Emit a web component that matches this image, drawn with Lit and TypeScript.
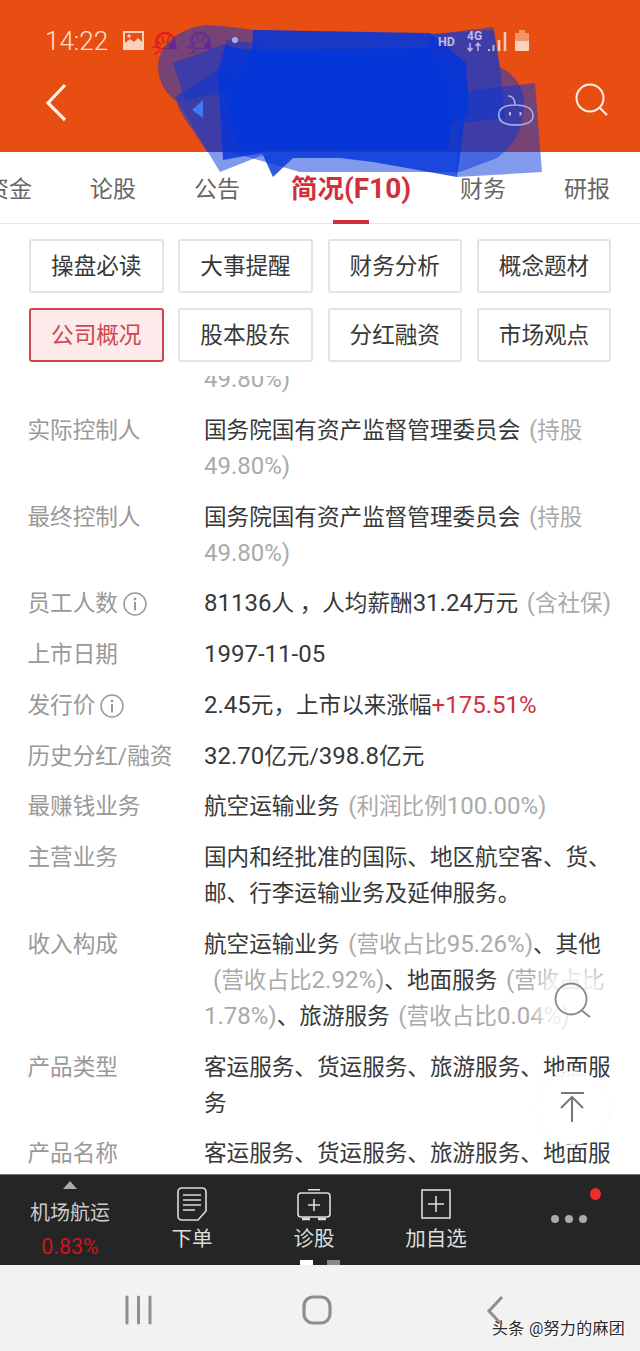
import { LitElement, html, css, svg } from "lit";
import { customElement } from "lit/decorators.js";

const split = (s: string) =>
  s.split(/([0-9A-Za-z.%\-\/()+]+)/).map((p, i) => (i % 2 ? html`<span class="n">${p}</span>` : p));

const info = html`<svg class="info" viewBox="0 0 24 24" width="24" height="24"><circle cx="12" cy="12" r="11" fill="none" stroke="#999" stroke-width="1.5"/><circle cx="12" cy="7" r="1.4" fill="#999"/><rect x="11" y="10" width="2" height="8.5" fill="#999"/></svg>`;

const rib = (a: number, c: string) => {
  const r = (a * Math.PI) / 180;
  const x1 = 10 + Math.cos(r) * 5, y1 = 16 + Math.sin(r) * 5;
  const x2 = 10 + Math.cos(r) * 12.5, y2 = 16 + Math.sin(r) * 12.5;
  return svg`<path d="M${x1} ${y1} L${x2} ${y2}" stroke="${c}" stroke-width="1.8"/>`;
};
const shell = (x: number, y: number, c: string, d: string) => svg`<g transform="translate(${x} ${y})">
  <path d="M3 16 C-1 7 4 1 10 1 C16 1 21 6 19 12" fill="none" stroke="${c}" stroke-width="2.4"/>
  ${[150, 185, 220, 255, 290, 325].map((a) => rib(a, c))}
  <path d="M4 16.500 H15" stroke="${c}" stroke-width="1.8"/>
  <path d="M18 8 L23 17 H13 Z" fill="${d}"/></g>`;

const BLUE = "#0536d8";
const scribble = [
  "M158 65 C160 40 185 27 207 25 C225 26 240 28 253 30 L430 34 L494 30 L500 67 C515 75 525 88 524 105 C522 130 518 140 497 158 L460 172 L300 172 L230 152 L207 152 C190 125 178 112 177 102 C168 95 158 85 158 65 Z",
  "M428 35 L493 27 L501 75 L505 118 L440 125 Z",
  "M430 58 L466 62 L470 115 L430 120 Z",
  "M460 92 L535 83 L542 172 L457 177 Z",
  "M175 97 L220 172 L263 155 L262 80 L217 70 Z",
  "M173 63 L228 43 L240 90 L185 100 Z",
  "M227 40 L260 44 L260 100 L218 90 Z",
];

@customElement("app-root")
export class AppRoot extends LitElement {
  static styles = css`
    :host { display: block; width: 640px; height: 1351px; position: relative; overflow: hidden; background: #fff;
      font-family: Roboto, "Noto Sans CJK SC", sans-serif; font-size: 22.6px; color: #383838; }
    .n { font-size: 24px; line-height: 0; }
    .page { display: flex; flex-direction: column; height: 1351px; }
    .header { height: 152px; background: #e84e12; flex: none; display: flex; flex-direction: column; }
    .status { height: 82px; padding-left: 45px; display: flex; align-items: center; color: #fde0d0; font-size: 26px; font-weight: 300; }
    .nav { flex: 1; display: flex; justify-content: space-between; padding: 0 30px 0 44px; align-items: flex-start; }
    .tabs { height: 72px; flex: none; display: flex; margin-left: -43px; border-bottom: 1px solid #e6e6e6; width: 700px; color: #666; box-sizing: border-box; font-size: 23px; }
    .tab { width: 104px; flex: none; display: flex; justify-content: center; padding-top: 20px; box-sizing: border-box; white-space: nowrap; line-height: 36px; }
    .tab.on { width: 164px; margin-right: -2px; padding-top: 19px; color: #d22f3c; font-weight: 700; font-size: 26.5px; position: relative; }
    .tab.on .n { font-size: 28px; line-height: 36px; }
    .tab.on::after { content: ""; position: absolute; left: 64px; bottom: -1px; width: 36px; height: 4px; background: #d22f3c; }
    .grid { flex: none; display: grid; grid-template-columns: repeat(4, 134.5px); gap: 15px 14.75px; padding: 15px 28px 14px 29px; }
    .btn { height: 54px; box-sizing: border-box; border: 2px solid #e3e3e3; border-radius: 3px; display: flex; align-items: center; justify-content: center; padding-bottom: 4px; }
    .btn.on { border-color: #cf4650; background: #fdeaea; color: #cf4650; }
    .scroll { flex: 1; overflow: hidden; min-height: 0; padding: 0 28px 0 27.5px; }
    .list { margin-top: -14px; display: flex; flex-direction: column; gap: 14.75px; }
    .row { display: grid; grid-template-columns: 176.5px 1fr; line-height: 36px; }
    .k { color: #999; display: flex; align-items: center; gap: 5px; height: 36px; white-space: nowrap; }
    .g { color: #aaa; margin-left: 3px; }
    .g.lead { margin-left: 9px; }
    .g.none { margin-left: 0; }
    .r { color: #d22f3c; }
    .bar { height: 91px; flex: none; background: #252525; border-top: 1px solid #777; box-sizing: border-box; display: flex; color: #ddd; position: relative; }
    .stock { width: 140px; display: flex; flex-direction: column; align-items: center; color: #ccc; font-size: 20px; padding-top: 6px; box-sizing: border-box; }
    .tri { width: 0; height: 0; border: 7.5px solid transparent; border-top: 0; border-bottom: 8px solid #aaa; }
    .name { line-height: 30px; margin-top: 9px; }
    .pct { color: #c9171e; line-height: 28px; font-size: 21.5px; margin-top: 5px; }
    .item { display: flex; flex-direction: column; align-items: center; width: 122px; padding-top: 12px; box-sizing: border-box; font-size: 20.5px; line-height: 30px; gap: 3px; }
    .item.a { margin-left: -9px; }
    .item svg { display: block; }
    .dot { position: absolute; left: 590px; top: 13px; width: 11px; height: 12px; border-radius: 50%; background: #ee2b2f; }
    .dots { position: absolute; left: 551px; top: 40px; display: flex; gap: 6px; }
    .dots i { width: 8px; height: 8px; border-radius: 50%; background: #aaa; }
    .pager { position: absolute; left: 300px; bottom: 0; display: flex; gap: 14px; }
    .pager i { width: 13px; height: 5px; background: #888; }
    .pager i:first-child { background: #fff; }
    .sys { height: 86px; flex: none; background: #f2f2f2; position: relative; }
    .mark { position: absolute; left: 492px; top: 53px; font-size: 16px; line-height: 22px; color: #2a2a2a; white-space: nowrap; letter-spacing: .3px; text-shadow: 0 0 2px #fff, 1px 1px 0 #fff; }
    .mark .n { font-size: 16px; }
    .over { position: absolute; left: 0; top: 0; pointer-events: none; }
    .glass { position: absolute; left: 526px; top: 956px; width: 92px; height: 92px; border-radius: 50%; background: radial-gradient(circle, rgba(255,255,255,.78) 40%, rgba(255,255,255,0) 72%); }
    .up { position: absolute; left: 536px; top: 1071px; width: 74px; height: 74px; border-radius: 50%; background: rgba(255,255,255,.95); box-shadow: 0 0 2px rgba(0,0,0,.08); }
  `;

  render() {
    const btns = ["操盘必读", "大事提醒", "财务分析", "概念题材", "公司概况", "股本股东", "分红融资", "市场观点"];
    return html`
      <div class="page">
        <div class="header">
          <div class="status"><span>14:22</span></div>
          <div class="nav">
            <svg width="24" height="40" viewBox="0 0 24 40"><path d="M21 3 L4 21 L21 38" fill="none" stroke="#fdf0e8" stroke-width="3.2"/></svg>
            <svg width="36" height="36" viewBox="0 0 36 36"><circle cx="16" cy="16" r="13.5" fill="none" stroke="#fdf0e8" stroke-width="2"/><path d="M26 26 L33 33" stroke="#fdf0e8" stroke-width="2.2"/></svg>
          </div>
        </div>
        <div class="tabs">
          ${["资金", "论股", "公告"].map((t) => html`<div class="tab">${t}</div>`)}
          <div class="tab on">${split("简况(F10)")}</div>
          ${["财务", "研报"].map((t) => html`<div class="tab">${t}</div>`)}
        </div>
        <div class="grid">${btns.map((b, i) => html`<div class="btn ${i === 4 ? "on" : ""}">${b}</div>`)}</div>
        <div class="scroll"><div class="list">
          <div class="row"><div class="k"></div><div class="g none">${split("49.80%)")}</div></div>
          <div class="row"><div class="k">实际控制人</div><div>国务院国有资产监督管理委员会 <span class="g">${split("(持股 49.80%)")}</span></div></div>
          <div class="row"><div class="k">最终控制人</div><div>国务院国有资产监督管理委员会 <span class="g">${split("(持股 49.80%)")}</span></div></div>
          <div class="row"><div class="k">员工人数${info}</div><div>${split("81136")}人 ，人均薪酬${split("31.24")}万元 <span class="g">${split("(含社保)")}</span></div></div>
          <div class="row"><div class="k">上市日期</div><div>${split("1997-11-05")}</div></div>
          <div class="row"><div class="k">发行价${info}</div><div>${split("2.45")}元，上市以来涨幅<span class="r">${split("+175.51%")}</span></div></div>
          <div class="row"><div class="k">历史分红/融资</div><div>${split("32.70")}亿元/${split("398.8")}亿元</div></div>
          <div class="row"><div class="k">最赚钱业务</div><div>航空运输业务 <span class="g">${split("(利润比例100.00%)")}</span></div></div>
          <div class="row"><div class="k">主营业务</div><div>国内和经批准的国际、地区航空客、货、邮、行李运输业务及延伸服务。</div></div>
          <div class="row"><div class="k">收入构成</div><div>航空运输业务 <span class="g">${split("(营收占比95.26%)")}</span>、其他 <span class="g lead">${split("(营收占比2.92%)")}</span>、地面服务 <span class="g">${split("(营收占比1.78%)")}</span>、旅游服务 <span class="g">${split("(营收占比0.04%)")}</span></div></div>
          <div class="row"><div class="k">产品类型</div><div>客运服务、货运服务、旅游服务、地面服务</div></div>
          <div class="row"><div class="k">产品名称</div><div>客运服务、货运服务、旅游服务、地面服务</div></div>
        </div></div>
        <div class="bar">
          <div class="stock"><div class="tri"></div><div class="name">机场航运</div><div class="pct">0.83%</div></div>
          <div class="item a">
            <svg width="30" height="34" viewBox="0 0 30 34"><path d="M5 1 H25 Q29 1 29 5 V24 L21 33 H5 Q1 33 1 29 V5 Q1 1 5 1 Z" fill="none" stroke="#ddd" stroke-width="1.6"/><path d="M6 8 H24 M6 13 H24 M6 18 H24 M6 23 H18" stroke="#ddd" stroke-width="1.6"/></svg>
            <span>下单</span>
          </div>
          <div class="item">
            <svg width="34" height="34" viewBox="0 0 34 34"><path d="M11 2.800 H23 M4 6 H30 Q33 6 33 9 V27 Q33 30 30 30 H4 Q1 30 1 27 V9 Q1 6 4 6 Z M17 12 V24 M11 18 H23" fill="none" stroke="#ddd" stroke-width="1.6"/><path d="M5 32 H13 M21 32 H29" stroke="#ddd" stroke-width="2.4"/></svg>
            <span>诊股</span>
          </div>
          <div class="item">
            <svg width="30" height="34" viewBox="0 0 30 34"><rect x="1" y="3" width="28" height="28" fill="none" stroke="#ddd" stroke-width="1.6"/><path d="M15 9 V25 M7 17 H23" stroke="#ddd" stroke-width="1.6"/></svg>
            <span>加自选</span>
          </div>
          <div class="dot"></div>
          <div class="dots"><i></i><i></i><i></i></div>
          <div class="pager"><i></i><i></i></div>
        </div>
        <div class="sys">
          <svg width="640" height="86" viewBox="0 0 640 86">
            <path d="M127 32 V58 M138.500 32 V58 M150 32 V58" stroke="#8e8e8e" stroke-width="3" stroke-linecap="round"/>
            <rect x="304" y="32" width="26" height="26" rx="9" fill="none" stroke="#8e8e8e" stroke-width="3.2"/>
            <path d="M502 32 L489 46 L502 60" fill="none" stroke="#8e8e8e" stroke-width="3"/>
          </svg>
          <div class="mark">头条 ${split("@")}努力的麻团</div>
        </div>
      </div>
      <div class="glass"></div>
      <div class="up"></div>
      <svg class="over" width="640" height="1351" viewBox="0 0 640 1351">
        <rect x="124" y="32" width="19" height="17" fill="none" stroke="#fbd3bd" stroke-width="2"/>
        <path d="M125 48 V43 L130 39 L134 42 L138 38 L142 42 V48 Z" fill="#fbd3bd"/>
        <circle cx="129" cy="36" r="1.800" fill="#fbd3bd"/>
        ${shell(155, 32, "#e0201c", "#c0145a")}
        ${shell(190, 32, "#b83048", "#c0145a")}
        ${scribble.map((d) => svg`<path d="${d}" fill="${BLUE}" opacity=".5"/>`)}
        <path d="M253 30 L430 33 L465 62 L468 95 L457 177 L373 162 L340 158 L293 158 L273 177 L262 153 L223 160 L218 72 L225 46 L252 50 Z" fill="${BLUE}" opacity=".82"/>
        <path d="M253 50 L430 48 L455 100 L448 150 L300 150 L240 150 L225 100 Z" fill="${BLUE}"/>
        <circle cx="235" cy="40" r="3" fill="#9ab0f0"/>
        <path d="M192 110 L203 100 V118 Z" fill="#3f7af0"/>
        <text x="438" y="46" font-size="12.500" font-weight="700" fill="#c4b8e4" font-family="Roboto">HD</text>
        <text x="467" y="40" font-size="12" font-weight="700" fill="#c4b8e4" font-family="Roboto">4G</text>
        <path d="M470 43 V51 M467.500 48 L470 51 L472.500 48 M478 51 V43 M475.500 46 L478 43 L480.500 46" fill="none" stroke="#c4b8e4" stroke-width="1.4"/>
        <path d="M489 49 V51" stroke="#c8b0d0" stroke-width="2"/>
        <path d="M493.500 45 V51" stroke="#c8b0d0" stroke-width="2"/>
        <path d="M499 40 V51 M505 32 V51" stroke="#f8cdb5" stroke-width="2.600"/>
        <rect x="519" y="30" width="6" height="3" fill="#f0966a"/>
        <rect x="515" y="33" width="14" height="18" rx="1" fill="#fbd3bd"/>
        <rect x="515" y="33" width="14" height="8" rx="1" fill="#f0966a"/>
        <path d="M508 96 C512 96 515 98 515 105 M498.800 115 C498.800 108 505 105 515 105 C526 105 533 108 533 116 C533 122 527 125 515 125 C504 125 498.800 122 498.800 115 Z" fill="none" stroke="#9db0ee" stroke-width="1.6"/>
        <path d="M510 112 V115.500 M520.500 112 V115.500" stroke="#aebcf2" stroke-width="2"/>
        <circle cx="571" cy="999" r="15.500" fill="none" stroke="#888" stroke-width="1.8"/>
        <path d="M581 1010 L590 1017" stroke="#888" stroke-width="2"/>
        <path d="M561 1093 H584 M572 1122 V1097 M561 1108 L572 1097 L583 1108" fill="none" stroke="#777" stroke-width="2"/>
      </svg>
    `;
  }
}
